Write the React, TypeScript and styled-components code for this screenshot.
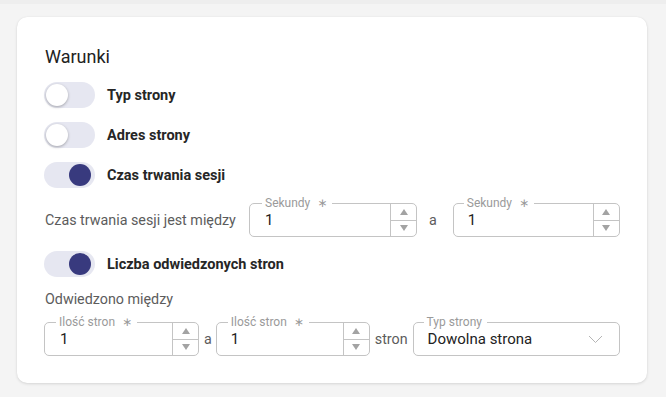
import React, { useState } from "react";
import styled, { createGlobalStyle } from "styled-components";

const GlobalStyle = createGlobalStyle`
  html, body {
    margin: 0;
    padding: 0;
    background: #f4f4f4;
    font-family: Roboto, "Liberation Sans", Arial, sans-serif;
  }
  * { box-sizing: border-box; }
`;

const Page = styled.div`
  width: 666px;
  height: 397px;
  background: #f4f4f4;
  border-top: 4px solid #eeeeee;
  padding: 13px 19px 0 17px;
`;

const Card = styled.div`
  width: 630px;
  height: 366px;
  background: #ffffff;
  border-radius: 10px;
  box-shadow: 0 1px 3px rgba(0, 0, 0, 0.12), 0 0 1px rgba(0, 0, 0, 0.08);
  padding: 29px 27px 0 27px;
  display: flex;
  flex-direction: column;
`;

const Title = styled.h2`
  margin: 0 0 7px 1px;
  font-size: 18px;
  line-height: 22px;
  font-weight: 400;
  color: #222222;
`;

const ToggleRow = styled.label`
  display: flex;
  align-items: center;
  gap: 12px;
  height: 40px;
  cursor: pointer;
`;

const Track = styled.span<{ $on: boolean }>`
  position: relative;
  display: inline-flex;
  align-items: center;
  width: 51px;
  height: 26px;
  border-radius: 13px;
  background: #e6e7f1;
  padding: 0 2px;
  justify-content: ${(p) => (p.$on ? "flex-end" : "flex-start")};
`;

const Thumb = styled.span<{ $on: boolean }>`
  width: 22px;
  height: 22px;
  border-radius: 50%;
  background: ${(p) => (p.$on ? "#383a7e" : "#ffffff")};
  box-shadow: ${(p) =>
    p.$on ? "none" : "0 1px 3px rgba(0,0,0,0.3)"};
  margin: ${(p) => (p.$on ? "0 2px 0 0" : "0")};
`;

const ToggleLabel = styled.span`
  font-size: 14.5px;
  font-weight: 700;
  color: #262626;
`;

const FieldRow = styled.div<{ $mt: number; $ml: number }>`
  display: flex;
  align-items: center;
  margin-top: ${(p) => p.$mt}px;
  margin-left: ${(p) => p.$ml}px;
  height: 34px;
`;

const Text = styled.span<{ $w?: number; $mr?: number; $ml?: number }>`
  flex-shrink: 0;
  white-space: nowrap;
  font-size: 14.3px;
  line-height: 20px;
  color: #5c5c5c;
  ${(p) => (p.$w ? `width: ${p.$w}px;` : "")}
  margin-left: ${(p) => p.$ml ?? 0}px;
  margin-right: ${(p) => p.$mr ?? 0}px;
`;

const SubHeading = styled.div`
  font-size: 14.3px;
  line-height: 20px;
  color: #5c5c5c;
  margin: 5px 0 0 1px;
`;

const Outline = styled.div<{ $w: number; $h: number }>`
  position: relative;
  flex-shrink: 0;
  display: flex;
  width: ${(p) => p.$w}px;
  height: ${(p) => p.$h}px;
  border: 1px solid #c4c4c4;
  border-radius: 5px;
  background: #fff;
`;

const Legend = styled.span<{ $left: number }>`
  position: absolute;
  top: -8px;
  left: ${(p) => p.$left}px;
  padding: 0 5px 0 3px;
  background: #ffffff;
  font-size: 12px;
  line-height: 14px;
  color: #9a9a9a;
  white-space: nowrap;
`;

const Star = styled.span`
  margin-left: 7px;
  font-family: "DejaVu Sans", sans-serif;
  font-size: 12px;
`;

const Value = styled.div<{ $pl: number }>`
  flex: 1;
  display: flex;
  align-items: center;
  padding-left: ${(p) => p.$pl}px;
  font-size: 15px;
  color: #222222;
`;

const Spinner = styled.div`
  width: 26px;
  display: flex;
  flex-direction: column;
  border-left: 1px solid #c4c4c4;
`;

const SpinBtn = styled.div<{ $up: boolean }>`
  flex: 1;
  display: flex;
  align-items: center;
  justify-content: center;
  border-top: ${(p) => (p.$up ? "none" : "1px solid #c4c4c4")};
  &::after {
    content: "";
    width: 0;
    height: 0;
    border-left: 4.5px solid transparent;
    border-right: 4.5px solid transparent;
    ${(p) =>
      p.$up
        ? "border-bottom: 6px solid #a3a3a3;"
        : "border-top: 6px solid #a3a3a3;"}
  }
`;

const SelectValue = styled.div`
  flex: 1;
  display: flex;
  align-items: center;
  padding-left: 14px;
  font-size: 15px;
  color: #222222;
`;

const Chevron = styled.div`
  width: 40px;
  display: flex;
  align-items: center;
  justify-content: center;
  padding-right: 6px;
`;

type NumProps = { label: string; w: number; pl: number; legendLeft: number };

const NumberField = ({ label, w, pl, legendLeft }: NumProps) => (
  <Outline $w={w} $h={34}>
    <Legend $left={legendLeft}>
      {label}
      <Star>∗</Star>
    </Legend>
    <Value $pl={pl}>1</Value>
    <Spinner>
      <SpinBtn $up />
      <SpinBtn $up={false} />
    </Spinner>
  </Outline>
);

const Toggle = ({ label, initial }: { label: string; initial: boolean }) => {
  const [on, setOn] = useState(initial);
  return (
    <ToggleRow onClick={() => setOn(!on)}>
      <Track $on={on}>
        <Thumb $on={on} />
      </Track>
      <ToggleLabel>{label}</ToggleLabel>
    </ToggleRow>
  );
};

const ToggleBlock = styled.div`
  margin-top: 7px;
`;

export default function App() {
  return (
    <>
      <GlobalStyle />
      <Page>
        <Card>
          <Title>Warunki</Title>
          <Toggle label="Typ strony" initial={false} />
          <Toggle label="Adres strony" initial={false} />
          <Toggle label="Czas trwania sesji" initial={true} />
          <FieldRow $mt={8} $ml={1}>
            <Text $w={204}>Czas trwania sesji jest między</Text>
            <NumberField label="Sekundy" w={168} pl={15} legendLeft={12} />
            <Text $ml={12} $mr={16}>a</Text>
            <NumberField label="Sekundy" w={167} pl={14} legendLeft={10} />
          </FieldRow>
          <ToggleBlock>
            <Toggle label="Liczba odwiedzonych stron" initial={true} />
          </ToggleBlock>
          <SubHeading>Odwiedzono między</SubHeading>
          <FieldRow $mt={13} $ml={0}>
            <NumberField label="Ilość stron" w={155} pl={15} legendLeft={11} />
            <Text $ml={5} $mr={4}>a</Text>
            <NumberField label="Ilość stron" w={154} pl={14} legendLeft={11} />
            <Text $ml={5} $mr={5}>stron</Text>
            <Outline $w={207} $h={34}>
              <Legend $left={10}>Typ strony</Legend>
              <SelectValue>Dowolna strona</SelectValue>
              <Chevron>
                <svg width="15" height="9" viewBox="0 0 15 9">
                  <path d="M1 1 L7.5 7.5 L14 1" fill="none" stroke="#b5b5b5" strokeWidth="1" />
                </svg>
              </Chevron>
            </Outline>
          </FieldRow>
        </Card>
      </Page>
    </>
  );
}
